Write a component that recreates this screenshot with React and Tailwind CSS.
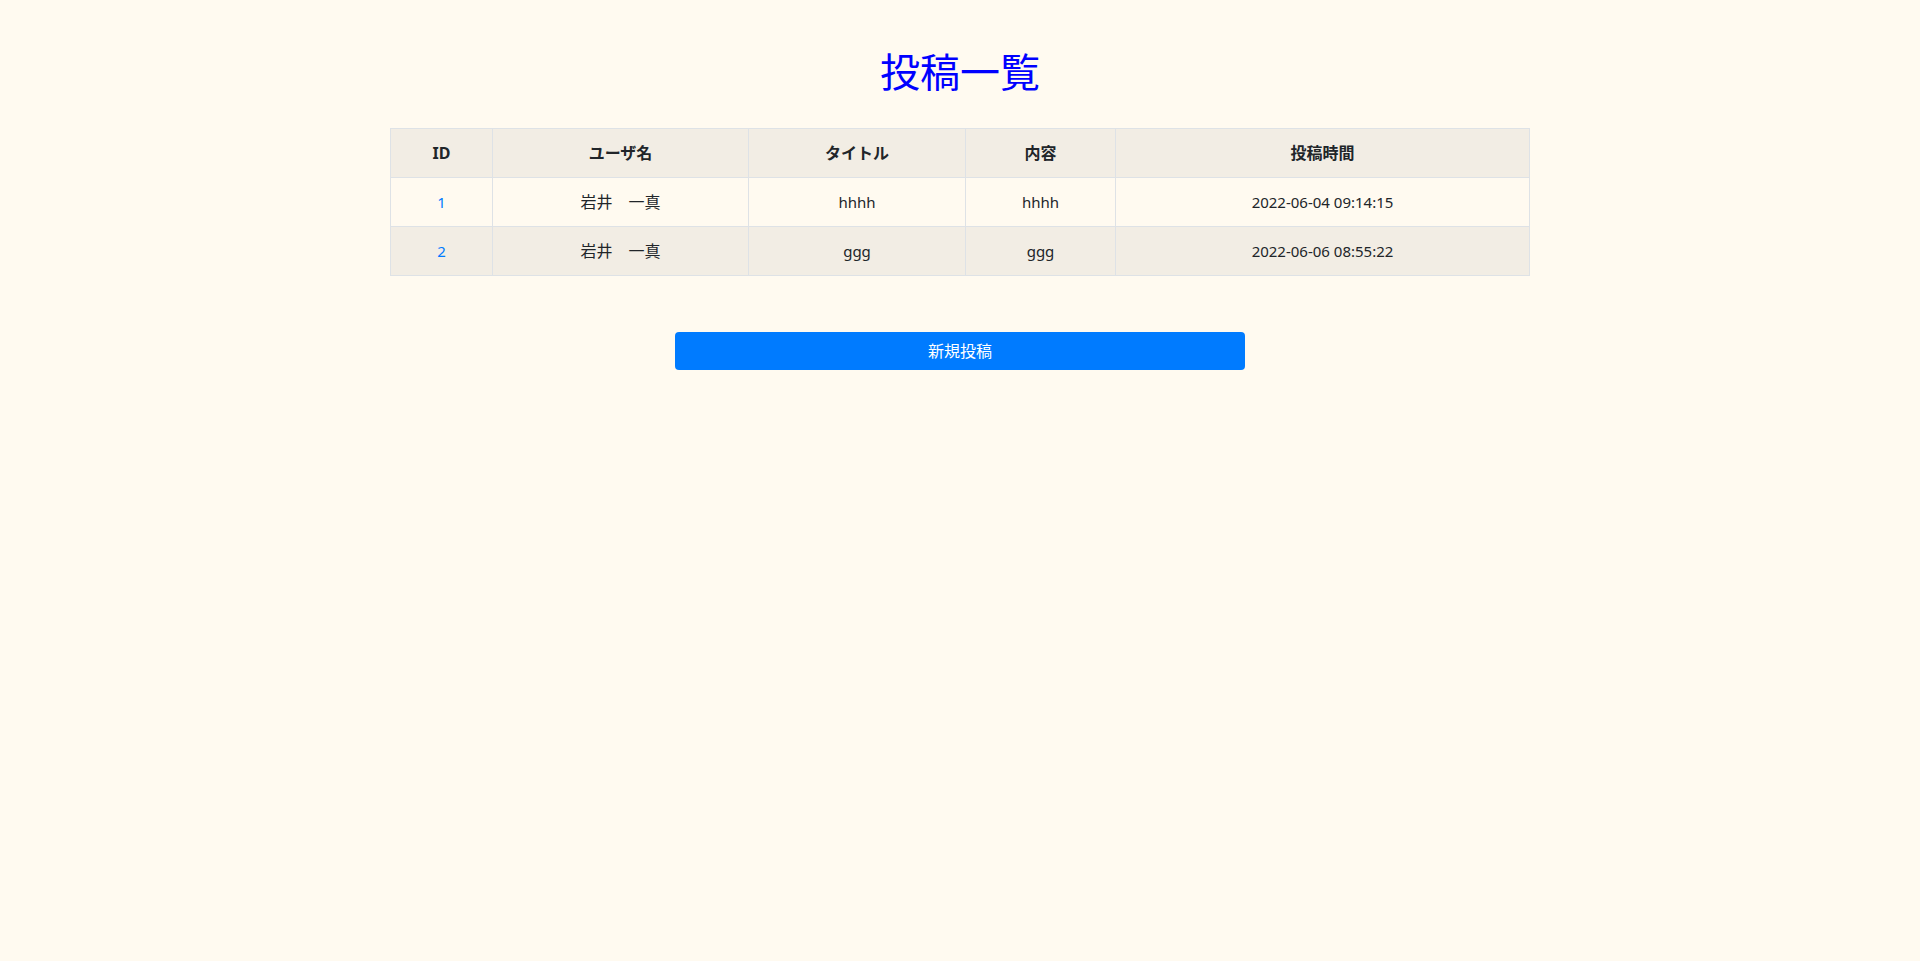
export default function App() {
  const rows = [
    { id: 1, user: "岩井　一真", title: "hhhh", content: "hhhh", time: "2022-06-04 09:14:15" },
    { id: 2, user: "岩井　一真", title: "ggg", content: "ggg", time: "2022-06-06 08:55:22" },
  ];
  const font = { fontFamily: '"Noto Sans", "Noto Sans CJK JP", sans-serif' };
  return (
    <div className="min-h-[961px] w-full bg-[#fffaf0] text-[#212529]" style={font}>
      <div className="flex flex-col items-center pt-[48px]">
        <h1 className="text-[40px] leading-[48px] text-[#0000ff] font-normal">投稿一覧</h1>
        <table className="mt-[32px] w-[1140px] border-collapse text-[15px] leading-[24px] text-center">
          <thead>
            <tr className="bg-[#f2ede4]">
              <th className="w-[102px] border border-[#dee2e6] px-3 py-3 font-bold text-[16px]">ID</th>
              <th className="w-[256px] border border-[#dee2e6] px-3 py-3 font-bold text-[16px]">ユーザ名</th>
              <th className="w-[217px] border border-[#dee2e6] px-3 py-3 font-bold text-[16px]">タイトル</th>
              <th className="w-[150px] border border-[#dee2e6] px-3 py-3 font-bold text-[16px]">内容</th>
              <th className="border border-[#dee2e6] px-3 py-3 font-bold text-[16px]">投稿時間</th>
            </tr>
          </thead>
          <tbody>
            {rows.map((r, i) => (
              <tr key={r.id} className={i % 2 === 1 ? "bg-[#f2ede4]" : ""}>
                <td className="border border-[#dee2e6] px-3 py-3 text-[#007bff]">{r.id}</td>
                <td className="border border-[#dee2e6] px-3 py-3 text-[16px]">{r.user}</td>
                <td className="border border-[#dee2e6] px-3 py-3">{r.title}</td>
                <td className="border border-[#dee2e6] px-3 py-3">{r.content}</td>
                <td className="border border-[#dee2e6] px-3 py-3">{r.time}</td>
              </tr>
            ))}
          </tbody>
        </table>
        <button className="mt-[56px] h-[38px] w-[570px] rounded-[4px] bg-[#007bff] text-[16px] text-white">
          新規投稿
        </button>
      </div>
    </div>
  );
}
